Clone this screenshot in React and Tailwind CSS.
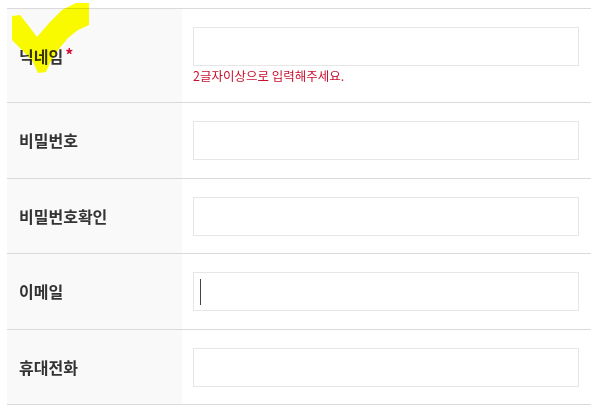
import React from 'react';

const fields = [
  { label: '닉네임', required: true, error: '2글자이상으로 입력해주세요.' },
  { label: '비밀번호' },
  { label: '비밀번호확인' },
  { label: '이메일', caret: true },
  { label: '휴대전화' },
];

const Row = ({ label, required, error, caret }) => (
  <div className="flex border-t border-[#dadada]">
    {/* 라벨 */}
    <div className="w-[175px] shrink-0 bg-[#f9f9f9] flex items-center pl-[12px] text-[16px] font-bold text-[#333]">
      {label}
      {required && <span className="text-[#d0103a] ml-[2px] -mt-[4px]">*</span>}
    </div>

    {/* 입력칸 */}
    <div className={`flex-1 pl-[11px] pr-[12px] pt-[18px] ${error ? 'pb-[18px]' : 'pb-[17.5px]'}`}>
      <div className="h-[39px] border border-[#e6e6e6] bg-white flex items-center pl-[6px]">
        {caret && <div className="w-px h-[26px] bg-[#444]" />}
      </div>
      {error && (
        <p className="text-[12.5px] leading-[16px] text-[#c8102e] mt-[2px]">{error}</p>
      )}
    </div>
  </div>
);

const App = () => {
  return (
    <div
      className="relative min-h-[409px] w-[604px] bg-white pt-[8px] pl-[7px]"
      style={{ fontFamily: '"Noto Sans CJK KR", "Noto Sans", sans-serif' }}
    >
      <div className="w-[584px] border-b border-[#dadada]">
        {fields.map((f) => (
          <Row key={f.label} {...f} />
        ))}
      </div>

      {/* 노란 체크 표시 */}
      <svg
        className="absolute left-0 top-0 mix-blend-multiply"
        width="100"
        height="80"
        viewBox="0 0 100 80"
      >
        <polygon
          fill="#ffff00"
          points="12,16 20,15 28,25 37,37 50,22 62,10 76,3 89,3 89,25 78,30 68,38 58,50 50,63 46,72 38,73 33,62 22,50 12,40"
        />
      </svg>
    </div>
  );
};

export default App;
